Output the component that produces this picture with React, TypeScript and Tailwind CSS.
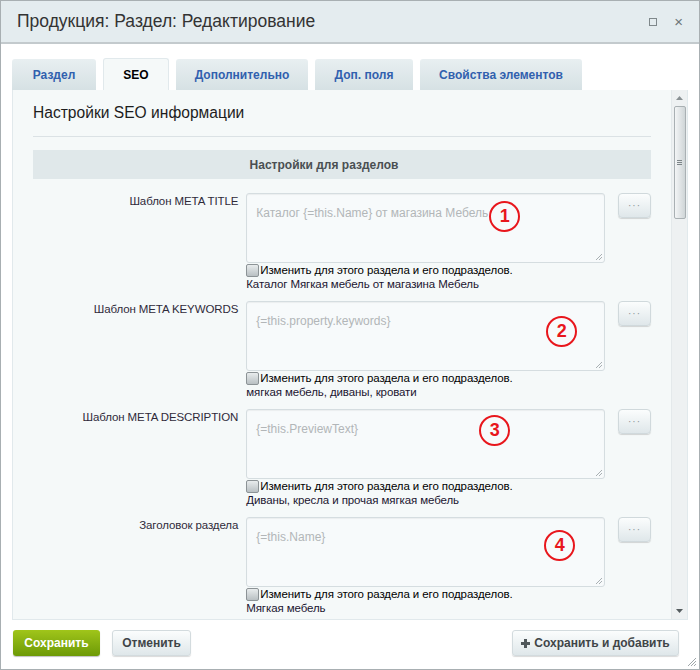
import React from "react";

const rows = [
  { label: "Шаблон META TITLE", placeholder: "Каталог {=this.Name} от магазина Мебель", value: "Каталог Мягкая мебель от магазина Мебель", n: 1, cx: 257, cy: 22 },
  { label: "Шаблон META KEYWORDS", placeholder: "{=this.property.keywords}", value: "мягкая мебель, диваны, кровати", n: 2, cx: 314, cy: 29 },
  { label: "Шаблон META DESCRIPTION", placeholder: "{=this.PreviewText}", value: "Диваны, кресла и прочая мягкая мебель", n: 3, cx: 247, cy: 20 },
  { label: "Заголовок раздела", placeholder: "{=this.Name}", value: "Мягкая мебель", n: 4, cx: 312, cy: 27 },
];

const tabs = [
  { name: "Раздел", w: "w-[84px]" },
  { name: "SEO", w: "w-[66px]", active: true },
  { name: "Дополнительно", w: "w-[132px]" },
  { name: "Доп. поля", w: "w-[98px]" },
  { name: "Свойства элементов", w: "w-[162px]" },
];

function Marker({ n, cx, cy }: { n: number; cx: number; cy: number }) {
  return (
    <div
      className="absolute w-[31px] h-[31px] rounded-full border-2 border-[#e8161c] flex items-center justify-center text-[#e8161c] text-[18px] font-bold"
      style={{ left: cx - 15, top: cy - 15 }}
    >
      {n}
    </div>
  );
}

function Row({ r }: { r: (typeof rows)[number] }) {
  return (
    <div className="flex mb-[10px]">
      <div className="w-[214px] pr-2 text-right text-[11.5px] tracking-[-0.1px] leading-[14px] pt-[1px] text-[#2f2a3a]">{r.label}</div>
      <div className="w-[360px]">
        <div className="relative h-[70px] border border-[#d5dde0] rounded-[3px] bg-[#f7fafb] shadow-[inset_0_1px_1px_rgba(0,0,0,0.05)]">
          <div className="pl-[9px] pt-[10px] text-[12px] text-[#b2b6b8]">{r.placeholder}</div>
          <Marker n={r.n} cx={r.cx} cy={r.cy} />
          <svg className="absolute right-[1px] bottom-[1px]" width="8" height="8" viewBox="0 0 8 8">
            <path d="M7 1 L1 7 M7 4 L4 7" stroke="#a9b0b3" strokeWidth="1" />
          </svg>
        </div>
        <div className="flex items-center h-[14px] text-[11.5px] tracking-[-0.1px] text-black">
          <span className="inline-block w-[13px] h-[13px] mr-[1px] rounded-[2px] border border-[#8c9396] bg-gradient-to-b from-[#e8eced] to-[#b9c0c3]" />
          Изменить для этого раздела и его подразделов.
        </div>
        <div className="h-[14px] leading-[14px] text-[11.5px] tracking-[-0.1px] text-[#1b1530]">{r.value}</div>
      </div>
      <div className="ml-[13px]">
        <div className="w-[33px] h-[25px] rounded-[4px] border border-[#d0d9dc] bg-gradient-to-b from-[#fbfdfd] to-[#dfe7ea] shadow-[0_1px_1px_rgba(0,0,0,0.15)] flex items-center justify-center text-[10px] text-[#8c9598] tracking-[1px] leading-none">
          ···
        </div>
      </div>
    </div>
  );
}

export default function App() {
  return (
    <div
      className="w-[700px] h-[670px] bg-white border border-[#a8afb2] flex flex-col overflow-hidden relative"
      style={{ fontFamily: '"Liberation Sans", Arial, sans-serif' }}
    >
      <div className="h-[43px] shrink-0 bg-[#e4ecef] border-b-2 border-[#c3cacd] flex items-center pl-[16px] pr-[16px]">
        <div className="text-[17.5px] text-[#333]">Продукция: Раздел: Редактирование</div>
        <div className="ml-auto flex items-center gap-[17px] text-[#6c7578]">
          <span className="inline-block w-[8px] h-[8px] border border-[#7f888b]" />
          <span className="text-[15px] leading-none">×</span>
        </div>
      </div>

      <div className="px-[11px] pt-[14px]">
        <div className="flex gap-[7px] h-[32px] items-end">
          {tabs.map((t) =>
            t.active ? (
              <div key={t.name} className={`${t.w} h-[32px] rounded-t-[3px] bg-[#f5f9f9] border border-b-0 border-[#e1e9ec] flex items-center justify-center text-[12px] font-bold text-black`}>
                {t.name}
              </div>
            ) : (
              <div key={t.name} className={`${t.w} h-[31px] rounded-t-[3px] bg-gradient-to-b from-[#e8eff1] to-[#d6e1e4] flex items-center justify-center text-[12px] font-bold text-[#3160ae]`}>
                {t.name}
              </div>
            )
          )}
        </div>

        <div className="h-[530px] flex border border-t-0 border-[#e1e9ec] bg-[#f5f9f9]">
          <div className="flex-1 overflow-hidden px-[20px]">
            <div className="text-[15.6px] text-[#1d1d1d] pt-[11px] pb-[12px] border-b border-[#dbe2e5]">Настройки SEO информации</div>
            <div className="mt-[13px] h-[29px] bg-[#e0e8ea] flex items-center justify-center pr-[36px] text-[12px] font-bold text-[#4a4f52]">
              Настройки для разделов
            </div>
            <div className="pt-[14px]">
              {rows.map((r) => (
                <Row key={r.n} r={r} />
              ))}
            </div>
          </div>
          <div className="w-[16px] bg-[#eef1f2] border-l border-[#e4e9eb] flex flex-col items-center">
            <svg className="mt-[6px]" width="7" height="4" viewBox="0 0 7 4"><path d="M0 4 L3.5 0 L7 4 Z" fill="#8a9194" /></svg>
            <div className="mt-[6px] w-[12px] h-[113px] rounded-[2px] border border-[#a9b0b3] bg-gradient-to-r from-[#f3f5f6] to-[#cfd5d7] flex items-center justify-center">
              <svg width="5" height="6" viewBox="0 0 5 6"><path d="M0 0.5 H5 M0 2.5 H5 M0 4.5 H5" stroke="#7d8588" /></svg>
            </div>
            <svg className="mt-auto mb-[6px]" width="7" height="4" viewBox="0 0 7 4"><path d="M0 0 L3.5 4 L7 0 Z" fill="#555c5f" /></svg>
          </div>
        </div>
      </div>

      <div className="flex items-center px-[12px] pt-[10px]">
        <div className="w-[87px] h-[26px] rounded-[3px] bg-gradient-to-b from-[#a0c51a] to-[#6d9a06] shadow-[0_1px_1px_rgba(0,0,0,0.25)] flex items-center justify-center text-[12px] font-bold text-white">
          Сохранить
        </div>
        <div className="ml-[12px] w-[79px] h-[26px] rounded-[3px] border border-[#d3dbde] bg-gradient-to-b from-[#fbfdfd] to-[#dfe7ea] shadow-[0_1px_1px_rgba(0,0,0,0.15)] flex items-center justify-center text-[12px] font-bold text-[#3f4548]">
          Отменить
        </div>
        <div className="ml-auto mr-[8px] w-[167px] h-[26px] rounded-[3px] border border-[#d3dbde] bg-gradient-to-b from-[#fbfdfd] to-[#dfe7ea] shadow-[0_1px_1px_rgba(0,0,0,0.15)] flex items-center justify-center text-[12px] font-bold text-[#3f4548]">
          <svg className="mr-[4px]" width="9" height="9" viewBox="0 0 9 9"><path d="M3 0 H6 V3 H9 V6 H6 V9 H3 V6 H0 V3 H3 Z" fill="#4f575a" /></svg>
          Сохранить и добавить
        </div>
      </div>

      <svg className="absolute right-[2px] bottom-[2px]" width="10" height="10" viewBox="0 0 10 10">
        <path d="M9 1 L1 9 M9 4 L4 9 M9 7 L7 9" stroke="#a0a7aa" strokeWidth="1" />
      </svg>
    </div>
  );
}
